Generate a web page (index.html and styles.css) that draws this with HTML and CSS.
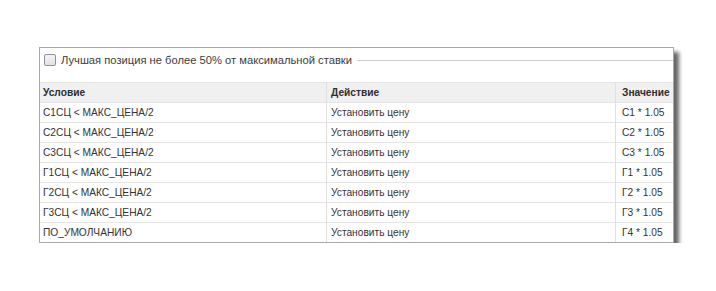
FILE: index.html
```html
<!DOCTYPE html>
<html lang="ru">
<head>
<meta charset="utf-8">
<link rel="stylesheet" href="styles.css">
</head>
<body>
<div class="panel">
  <div class="legend">
    <label class="legend-label"><span class="checkbox"></span>Лучшая позиция не более 50% от максимальной ставки</label>
    <span class="legend-line"></span>
  </div>
  <table class="rules">
    <thead>
      <tr><th class="c1">Условие</th><th class="c2">Действие</th><th class="c3">Значение</th></tr>
    </thead>
    <tbody>
      <tr><td class="c1">С1СЦ &lt; МАКС_ЦЕНА/2</td><td class="c2">Установить цену</td><td class="c3">С1 * 1.05</td></tr>
      <tr><td class="c1">С2СЦ &lt; МАКС_ЦЕНА/2</td><td class="c2">Установить цену</td><td class="c3">С2 * 1.05</td></tr>
      <tr><td class="c1">С3СЦ &lt; МАКС_ЦЕНА/2</td><td class="c2">Установить цену</td><td class="c3">С3 * 1.05</td></tr>
      <tr><td class="c1">Г1СЦ &lt; МАКС_ЦЕНА/2</td><td class="c2">Установить цену</td><td class="c3">Г1 * 1.05</td></tr>
      <tr><td class="c1">Г2СЦ &lt; МАКС_ЦЕНА/2</td><td class="c2">Установить цену</td><td class="c3">Г2 * 1.05</td></tr>
      <tr><td class="c1">Г3СЦ &lt; МАКС_ЦЕНА/2</td><td class="c2">Установить цену</td><td class="c3">Г3 * 1.05</td></tr>
      <tr><td class="c1">ПО_УМОЛЧАНИЮ</td><td class="c2">Установить цену</td><td class="c3">Г4 * 1.05</td></tr>
    </tbody>
  </table>
</div>
</body>
</html>
```

FILE: styles.css
```css
html, body {
  margin: 0;
  padding: 0;
  background: #ffffff;
}
body {
  padding: 47px 0 0 39px;
  font-family: "Liberation Sans", Arial, sans-serif;
  color: #333333;
}
.panel {
  width: 633px;
  border: 1px solid #a9a9a9;
  background: #ffffff;
  box-shadow: 5px 5px 4px rgba(0, 0, 0, 0.6);
}
.legend {
  display: flex;
  align-items: center;
  height: 12px;
  margin-top: 6px;
  padding-left: 4px;
}
.legend-label {
  display: flex;
  align-items: center;
  font-size: 11.2px;
  color: #3c3c3c;
  white-space: nowrap;
}
.checkbox {
  width: 10px;
  height: 10px;
  border: 1px solid #8f8f9d;
  border-radius: 2px;
  background: linear-gradient(#f4f4f4, #e2e2e2);
  margin-right: 5px;
}
.legend-line {
  flex: 1;
  height: 0;
  border-top: 1px solid #cccccc;
  margin-left: 5px;
}
.rules {
  width: 100%;
  margin-top: 16px;
  border-collapse: collapse;
  table-layout: fixed;
  font-size: 10.2px;
}
.rules th, .rules td {
  text-align: left;
  white-space: nowrap;
  overflow: hidden;
  border-left: 1px solid #e0e0e0;
  padding: 0 4px;
}
.rules th:first-child, .rules td:first-child {
  border-left: none;
}
.rules th {
  height: 19px;
  font-weight: bold;
  background: #f0f0f0;
  color: #2e2e2e;
  border-top: 1px solid #e4e4e4;
}
.rules td {
  height: 19px;
  border-top: 1px solid #e4e4e4;
}
.rules .c1 { width: 279px; padding-left: 3px; }
.rules .c2 { width: 280px; padding-left: 4px; }
.rules .c3 { padding-left: 6px; padding-right: 0; }
```
